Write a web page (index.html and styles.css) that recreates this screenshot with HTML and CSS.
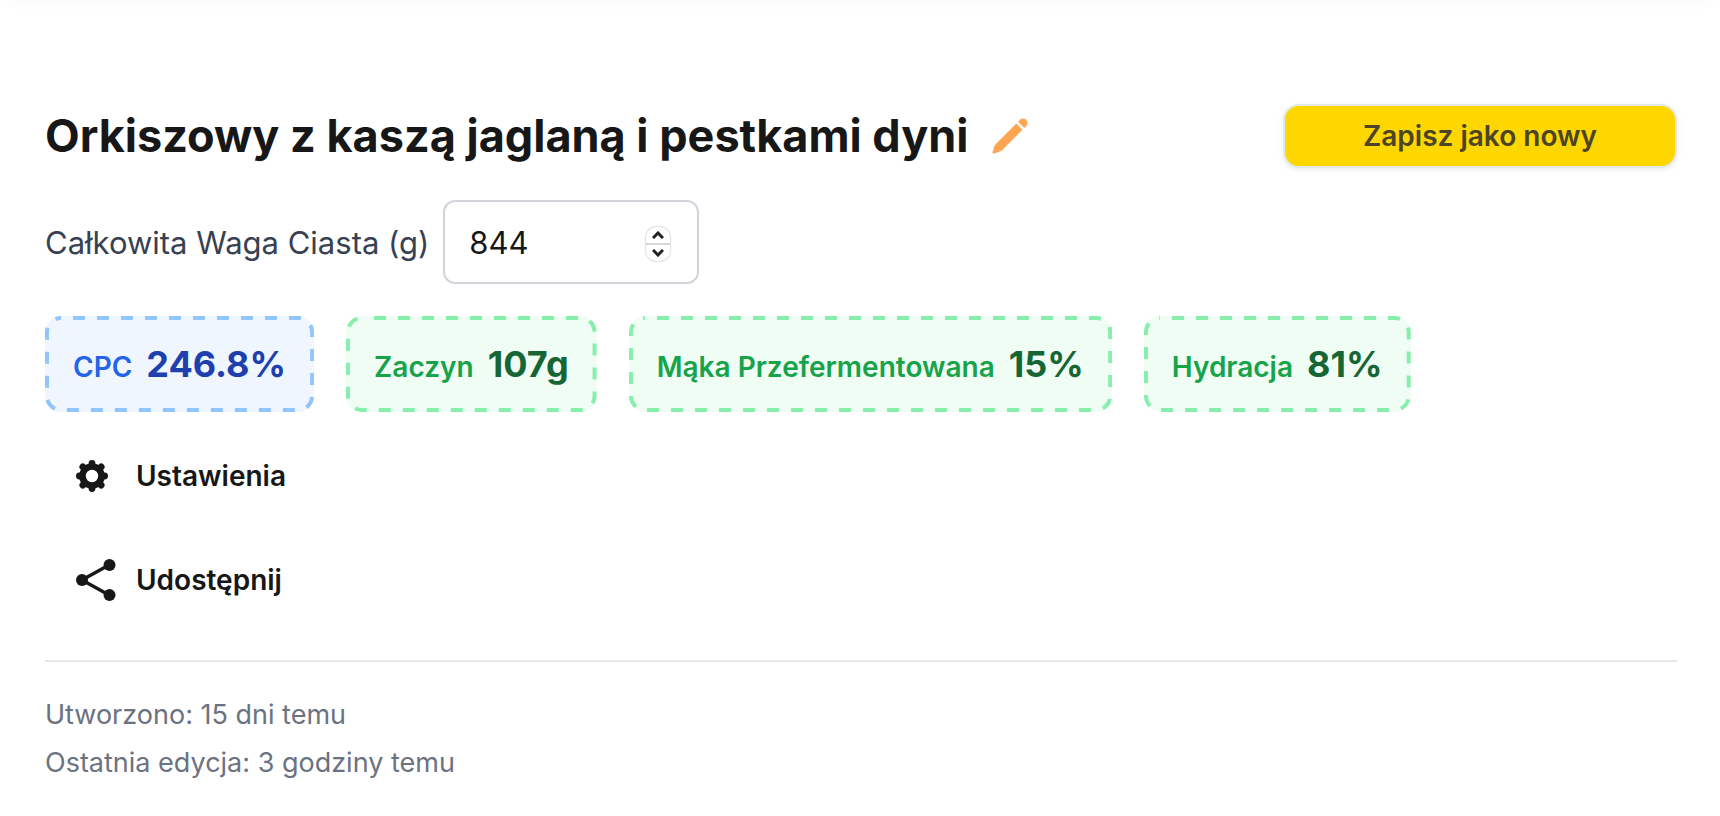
FILE: index.html
```html
<!DOCTYPE html>
<html lang="pl">
<head>
  <meta charset="UTF-8">
  <meta name="viewport" content="width=device-width, initial-scale=1">
  <title>Orkiszowy z kaszą jaglaną i pestkami dyni</title>
  <link rel="stylesheet" href="styles.css">
</head>
<body>
  <div class="navbar-shadow"></div>
  <main class="recipe">
    <header class="recipe-header">
      <div class="title-group">
        <h1>Orkiszowy z kaszą jaglaną i pestkami dyni</h1>
        <button type="button" class="edit-button" aria-label="Edytuj nazwę">
          <svg width="40" height="40" viewBox="0 0 24 24" fill="currentColor">
            <path d="M21.731 2.269a2.625 2.625 0 00-3.712 0l-1.157 1.157 3.712 3.712 1.157-1.157a2.625 2.625 0 000-3.712zM19.513 8.199l-3.712-3.712-12.15 12.15a5.25 5.25 0 00-1.32 2.214l-.8 2.685a.75.75 0 00.933.933l2.685-.8a5.25 5.25 0 002.214-1.32L19.513 8.2z"/>
          </svg>
        </button>
      </div>
      <button type="button" class="save-button">Zapisz jako nowy</button>
    </header>

    <div class="weight-row">
      <label for="weight">Całkowita Waga Ciasta (g)</label>
      <div class="number-field">
        <input type="number" id="weight" value="844" min="0">
        <div class="stepper">
          <button type="button" aria-label="Zwiększ" onclick="document.getElementById('weight').stepUp()">
            <svg width="12" height="8" viewBox="0 0 12 8"><path d="M1 7l5-5 5 5"/></svg>
          </button>
          <button type="button" aria-label="Zmniejsz" onclick="document.getElementById('weight').stepDown()">
            <svg width="12" height="8" viewBox="0 0 12 8"><path d="M1 1l5 5 5-5"/></svg>
          </button>
        </div>
      </div>
    </div>

    <div class="stats">
      <div class="stat stat-blue">
        <svg class="stat-border"><rect x="2" y="2" rx="14"/></svg>
        <span class="stat-label">CPC</span><span class="stat-value">246.8%</span>
      </div>
      <div class="stat">
        <svg class="stat-border"><rect x="2" y="2" rx="14"/></svg>
        <span class="stat-label">Zaczyn</span><span class="stat-value">107g</span>
      </div>
      <div class="stat">
        <svg class="stat-border"><rect x="2" y="2" rx="14"/></svg>
        <span class="stat-label">Mąka Przefermentowana</span><span class="stat-value">15%</span>
      </div>
      <div class="stat">
        <svg class="stat-border"><rect x="2" y="2" rx="14"/></svg>
        <span class="stat-label">Hydracja</span><span class="stat-value">81%</span>
      </div>
    </div>

    <div class="actions">
      <button type="button" class="action">
        <span class="action-icon">
          <svg width="32" height="32" viewBox="0 0 32 32" fill="none" stroke="currentColor">
            <circle cx="16" cy="16" r="9.5" stroke-width="6.6"/>
            <path stroke-width="6.8" stroke-linecap="round" d="M16 5V3.4M16 27v1.6M5 16H3.4M27 16h1.6M8 8L6.800 6.800M24 8L25.200 6.800M8 24L6.800 25.200M24 24L25.200 25.200"/>
          </svg>
        </span>
        Ustawienia
      </button>
      <button type="button" class="action">
        <span class="action-icon">
          <svg width="40" height="42" viewBox="0 0 40 42" fill="currentColor">
            <path d="M33 6L6 21l27 15" fill="none" stroke="currentColor" stroke-width="3.4"/>
            <circle cx="33.5" cy="6" r="6"/>
            <circle cx="6" cy="21" r="6"/>
            <circle cx="33.5" cy="36" r="6"/>
          </svg>
        </span>
        Udostępnij
      </button>
    </div>

    <footer class="meta">
      <p>Utworzono: 15 dni temu</p>
      <p>Ostatnia edycja: 3 godziny temu</p>
    </footer>
  </main>
</body>
</html>
```
FILE: styles.css
```css
* {
  box-sizing: border-box;
}
body {
  margin: 0;
  background: #fff;
  color: #171717;
  font-family: Inter, "Liberation Sans", sans-serif;
  font-size: 28px;
}
button, input {
  font: inherit;
  color: inherit;
}
button {
  padding: 0;
  border: 0;
  background: none;
  cursor: pointer;
}
svg {
  display: block;
}
.navbar-shadow {
  height: 0;
  margin: 0 8px;
  box-shadow: 0 0 12px 1px rgba(0, 0, 0, 0.1);
}
.recipe {
  padding: 104px 43px 24px 45px;
}
.recipe-header {
  display: flex;
  justify-content: space-between;
  align-items: center;
  height: 64px;
}
.title-group {
  display: flex;
  align-items: center;
  gap: 22px;
}
h1 {
  margin: 0;
  font-size: 45px;
  font-weight: 700;
  line-height: 64px;
}
.edit-button {
  color: #ffa552;
}
.save-button {
  width: 394px;
  height: 64px;
  border: 2px solid #e5e6e6;
  border-radius: 16px;
  background: #ffd700;
  color: #4b4427;
  font-weight: 600;
  box-shadow: 0 2px 6px rgba(0, 0, 0, 0.08);
}
.weight-row {
  display: flex;
  align-items: center;
  gap: 14px;
  margin-top: 32px;
  font-size: 31px;
}
.weight-row label {
  color: #374151;
}
.number-field {
  position: relative;
  width: 256px;
}
.number-field input {
  display: block;
  width: 100%;
  height: 84px;
  padding: 0 60px 0 24px;
  border: 2px solid #d1d5db;
  border-radius: 12px;
  background: #fff;
  appearance: textfield;
  -moz-appearance: textfield;
}
.number-field input::-webkit-inner-spin-button {
  appearance: none;
}
.stepper {
  position: absolute;
  top: 27px;
  right: 29px;
  display: flex;
  flex-direction: column;
  width: 24px;
  height: 34px;
  border-radius: 10px;
  background: #fff;
  box-shadow: 0 0 2px rgba(0, 0, 0, 0.4);
}
.stepper button {
  display: flex;
  flex: 1;
  justify-content: center;
  align-items: center;
}
.stepper button + button {
  border-top: 2px solid #d8d8d8;
}
.stepper path {
  fill: none;
  stroke: #222;
  stroke-width: 3;
}
.stats {
  display: flex;
  flex-wrap: wrap;
  gap: 32px;
  margin-top: 32px;
}
.stat {
  position: relative;
  display: flex;
  align-items: baseline;
  gap: 14px;
  padding: 20px 28px;
  border-radius: 16px;
  background: #f0fdf4;
  color: #86efac;
}
/* long dashes, drawn over the edge of the tile */
.stat-border {
  position: absolute;
  top: 0;
  left: 0;
  width: 100%;
  height: 100%;
}
.stat-border rect {
  width: calc(100% - 4px);
  height: calc(100% - 4px);
  fill: none;
  stroke: currentColor;
  stroke-width: 4;
  stroke-dasharray: 12;
  stroke-dashoffset: -12;
}
.stat-label {
  color: #16a34a;
  font-weight: 600;
  line-height: 40px;
}
.stat-value {
  color: #166534;
  font-size: 36px;
  font-weight: 700;
  line-height: 56px;
}
.stat-blue {
  background: #eff6ff;
  color: #93c5fd;
}
.stat-blue .stat-label {
  color: #2563eb;
}
.stat-blue .stat-value {
  color: #1e40af;
}
.actions {
  display: flex;
  flex-direction: column;
  align-items: flex-start;
  gap: 8px;
  margin-top: 16px;
}
.action {
  display: flex;
  align-items: center;
  gap: 20px;
  height: 96px;
  padding: 0 31px;
  font-weight: 600;
}
.action-icon {
  width: 40px;
}
.meta {
  margin-top: 32px;
  padding-top: 29px;
  border-top: 2px solid #e5e7eb;
  color: #6b7280;
  font-size: 27px;
}
.meta p {
  margin: 0;
  line-height: 48px;
}
```
